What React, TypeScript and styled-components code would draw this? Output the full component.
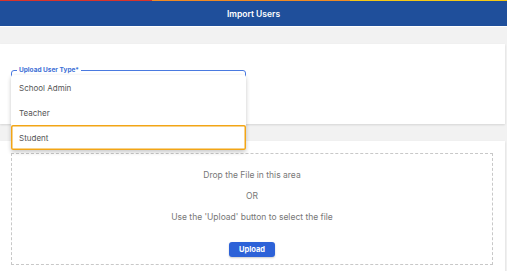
import React from "react";
import styled, { createGlobalStyle } from "styled-components";

const Global = createGlobalStyle`
  html, body { margin: 0; padding: 0; background: #f2f2f2; }
  body { font-family: "Inter", "Noto Sans", sans-serif; }
  * { box-sizing: border-box; }
`;

const Page = styled.div`
  width: 507px;
  height: 271px;
  overflow: hidden;
  background: #f2f2f2;
`;

const Stripe = styled.div`
  display: flex;
  height: 1px;
`;

const StripePart = styled.div<{ $c: string; $w: number }>`
  width: ${(p) => p.$w}px;
  background: ${(p) => p.$c};
`;

const Header = styled.header`
  height: 26px;
  background: #1f4f9b;
  color: #fff;
  display: flex;
  align-items: center;
  justify-content: center;
  font-size: 8.5px;
  font-weight: 600;
  border-bottom: 1px solid #fff;
`;

const Card = styled.section<{ $h: number; $mt: number }>`
  margin-top: ${(p) => p.$mt}px;
  margin-right: 2px;
  height: ${(p) => p.$h}px;
  background: #fff;
  box-shadow: 0 1px 2px rgba(0, 0, 0, 0.12);
  position: relative;
`;

const SelectWrap = styled.div`
  position: absolute;
  left: 11px;
  top: 23px;
  width: 235px;
  z-index: 5;
`;

const Field = styled.fieldset`
  margin: 0;
  padding: 0 0 0 5px;
  height: 32px;
  border: 1px solid #4a7ae0;
  border-radius: 3px;
`;

const Legend = styled.legend`
  padding: 0 2px;
  font-size: 6.5px;
  font-weight: 700;
  color: #3d6fd6;
  line-height: 6px;
`;

const Menu = styled.ul`
  position: absolute;
  top: 8px;
  left: 0;
  width: 235px;
  margin: 0;
  padding: 0;
  list-style: none;
  background: #fff;
  box-shadow: 0 2px 4px rgba(0, 0, 0, 0.22);
  border-radius: 2px;
`;

const Item = styled.li<{ $active?: boolean }>`
  height: 25px;
  display: flex;
  align-items: center;
  padding-left: 8px;
  font-size: 8px;
  color: #555;
  box-shadow: ${(p) => (p.$active ? "inset 0 0 0 1.5px #f2a516" : "none")};
  border-radius: 2px;
`;

const DropBody = styled.div`
  padding: 12px 12px 0 11px;
`;

const DropZone = styled.div`
  height: 112px;
  border: 1px dashed #c8c8c8;
  display: flex;
  flex-direction: column;
  align-items: center;
  padding-top: 15px;
  color: #777;
  font-size: 8.5px;
`;

const Line = styled.p`
  margin: 0;
  height: 21px;
  line-height: 12px;
`;

const UploadButton = styled.button`
  margin-top: 10px;
  width: 46px;
  height: 15px;
  border: none;
  border-radius: 3px;
  background: #2d62d8;
  color: #fff;
  font-family: inherit;
  font-size: 7.5px;
  font-weight: 700;
  box-shadow: 0 1px 2px rgba(0, 0, 0, 0.2);
`;

export default function App() {
  return (
    <Page>
      <Global />
      <Stripe>
        <StripePart $c="#d9342b" $w={152} />
        <StripePart $c="#f08a24" $w={198} />
        <StripePart $c="#f6c915" $w={157} />
      </Stripe>
      <Header>Import Users</Header>
      <Card $h={80} $mt={17}>
        <SelectWrap>
          <Field>
            <Legend>Upload User Type*</Legend>
          </Field>
          <Menu>
            <Item>School Admin</Item>
            <Item>Teacher</Item>
            <Item $active>Student</Item>
          </Menu>
        </SelectWrap>
      </Card>
      <Card $h={140} $mt={17}>
        <DropBody>
          <DropZone>
            <Line>Drop the File in this area</Line>
            <Line>OR</Line>
            <Line>Use the 'Upload' button to select the file</Line>
            <UploadButton>Upload</UploadButton>
          </DropZone>
        </DropBody>
      </Card>
    </Page>
  );
}
